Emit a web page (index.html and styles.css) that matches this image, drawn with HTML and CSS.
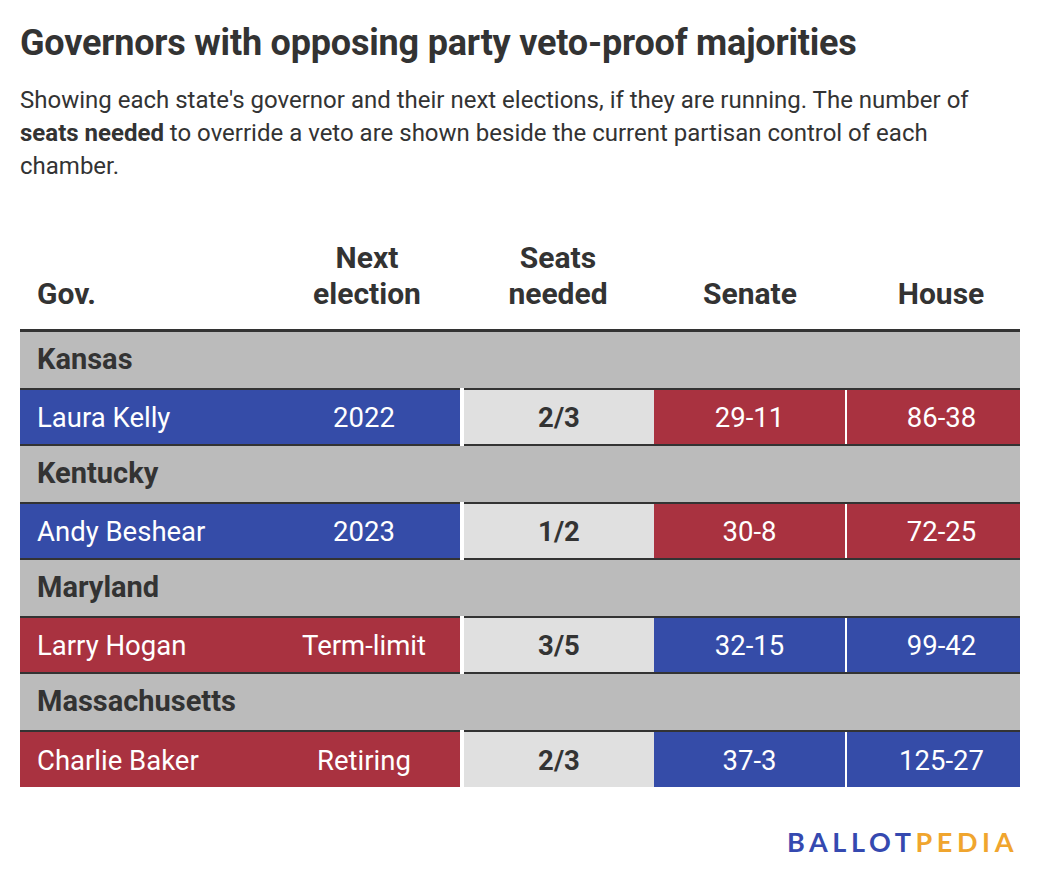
FILE: index.html
```html
<!DOCTYPE html>
<html>
<head>
<meta charset="utf-8">
<link rel="stylesheet" href="styles.css">
</head>
<body>
<div class="chart">
  <h1 class="title">Governors with opposing party veto-proof majorities</h1>
  <p class="desc">Showing each state's governor and their next elections, if they are running. The number of <b>seats needed</b> to override a veto are shown beside the current partisan control of each chamber.</p>
  <table class="tbl">
    <colgroup>
      <col class="c-gov"><col class="c-next"><col class="c-seats"><col class="c-senate"><col class="c-house">
    </colgroup>
    <thead>
      <tr>
        <th class="h-left">Gov.</th>
        <th>Next<br>election</th>
        <th>Seats<br>needed</th>
        <th>Senate</th>
        <th class="h-house">House</th>
      </tr>
    </thead>
    <tbody>
      <tr class="group"><td colspan="5">Kansas</td></tr>
      <tr class="data">
        <td class="gov dem">Laura Kelly</td>
        <td class="next dem">2022</td>
        <td class="seats">2/3</td>
        <td class="senate rep">29-11</td>
        <td class="house rep">86-38</td>
      </tr>
      <tr class="group"><td colspan="5">Kentucky</td></tr>
      <tr class="data">
        <td class="gov dem">Andy Beshear</td>
        <td class="next dem">2023</td>
        <td class="seats">1/2</td>
        <td class="senate rep">30-8</td>
        <td class="house rep">72-25</td>
      </tr>
      <tr class="group"><td colspan="5">Maryland</td></tr>
      <tr class="data">
        <td class="gov rep">Larry Hogan</td>
        <td class="next rep">Term-limit</td>
        <td class="seats">3/5</td>
        <td class="senate dem">32-15</td>
        <td class="house dem">99-42</td>
      </tr>
      <tr class="group"><td colspan="5">Massachusetts</td></tr>
      <tr class="data last">
        <td class="gov rep">Charlie Baker</td>
        <td class="next rep">Retiring</td>
        <td class="seats">2/3</td>
        <td class="senate dem">37-3</td>
        <td class="house dem">125-27</td>
      </tr>
    </tbody>
  </table>
  <div class="footer">
    <div class="logo"><span class="logo-a">BALLOT</span><span class="logo-b">PEDIA</span></div>
  </div>
</div>
</body>
</html>
```
FILE: styles.css
```css
* { box-sizing: border-box; }
html, body { margin: 0; padding: 0; background: #fff; }
body { font-family: Roboto, "Noto Sans", sans-serif; color: #333; }
.chart { width: 1040px; padding: 20px 20px 0 20px; }
.title { margin: 0; font-size: 36px; font-weight: 700; line-height: 46px; color: #333; letter-spacing: -0.2px; }
.desc { margin: 18px 0 0 0; font-size: 24px; line-height: 33px; color: #333; }
.desc b { font-weight: 700; }
.tbl { margin-top: 57px; width: 1000px; border-collapse: collapse; table-layout: fixed; }
.c-gov { width: 252px; }
.c-next { width: 190px; }
.c-seats { width: 192px; }
.c-senate { width: 192px; }
.c-house { width: 174px; }
.tbl th { font-size: 30px; font-weight: 700; line-height: 36px; text-align: center; vertical-align: bottom; padding: 0 0 17px 0; border-bottom: 3px solid #333; color: #333; }
.tbl th.h-left { text-align: left; padding-left: 17px; }
.tbl th.h-house { padding-left: 16px; }
.group td { background: #bbbbbb; height: 58px; font-size: 29px; font-weight: 700; padding: 0 0 2px 17px; border-bottom: 2px solid #333; color: #333; }
.data td { height: 56px; font-size: 27.5px; text-align: center; color: #fff; padding: 2px 0 0 0; border-bottom: 2px solid #333; }
.data.last td { border-bottom: none; height: 56px; }
.data td.gov { text-align: left; padding-left: 17px; }
.data td.next { padding-right: 4px; }
.data td.seats { background: #e0e0e0; color: #333; font-weight: 700; border-left: 4px solid #fff; }
.data td.house { border-left: 2px solid #fff; padding-left: 16px; }
.dem { background: #354ca8; }
.rep { background: #a93240; }
.footer { display: flex; justify-content: flex-end; padding: 40px 2px 0 0; }
.logo { font-family: Lato, "Open Sans", sans-serif; font-weight: 700; font-size: 27px; letter-spacing: 4.6px; line-height: 30px; }
.logo-a { color: #3549b0; }
.logo-b { color: #f0a52e; }
```
